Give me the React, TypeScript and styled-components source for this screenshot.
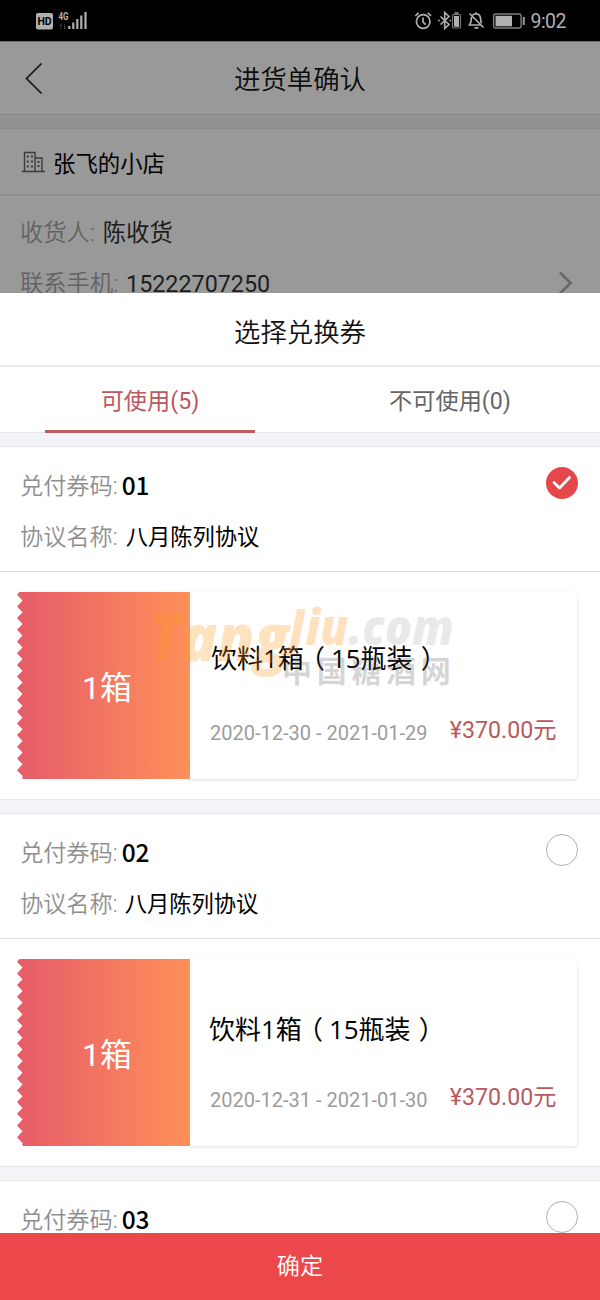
import React from 'react';
import styled, { createGlobalStyle } from 'styled-components';

const Global = createGlobalStyle`
  * { box-sizing: border-box; }
  body {
    margin: 0;
    background: #fff;
    font-family: Roboto, "Noto Sans CJK SC", sans-serif;
  }
`;

const Screen = styled.div`
  width: 600px;
  height: 1300px;
  overflow: hidden;
  display: flex;
  flex-direction: column;
  background: #fff;
`;

const StatusBar = styled.div`
  height: 41px;
  flex: none;
  display: flex;
  justify-content: space-between;
  background: #000;
`;

const Backdrop = styled.div`
  height: 252px;
  flex: none;
  overflow: hidden;
  background: #999;
  border-top: 1px solid #6e6e6e;
`;

const NavBar = styled.header`
  height: 73px;
  display: grid;
  grid-template-columns: 80px 1fr 80px;
  align-items: center;
  border-bottom: 1px solid #87878a;
`;

const Title = styled.h1<{ $color?: string }>`
  margin: 0;
  padding-top: 4px;
  font-size: 26.4px;
  line-height: 40px;
  font-weight: 350;
  text-align: center;
  color: ${(p) => p.$color || '#111'};
`;

const Divider = styled.div<{ $dim?: boolean }>`
  height: ${(p) => (p.$dim ? 14 : 15)}px;
  background: ${(p) => (p.$dim ? '#929294' : '#f3f4f7')};
  border-top: ${(p) => (p.$dim ? 0 : 1)}px solid #e6e6e9;
  border-bottom: 1px solid ${(p) => (p.$dim ? '#8a8a8c' : '#e6e6e9')};
`;

const StoreRow = styled.div`
  height: 67px;
  padding: 1px 0 0 22px;
  display: flex;
  align-items: center;
  gap: 8px;
  border-bottom: 2px solid #8e8e8e;
  font-size: 22.4px;
  color: #000;
`;

const Contact = styled.div`
  display: flex;
  justify-content: space-between;
  padding: 11px 26px 0 20px;
`;

const Line = styled.div`
  height: 51px;
  display: flex;
  align-items: center;
  gap: 8px;
  font-size: 23.3px;
  line-height: 34px;
`;

const DimLabel = styled.span`
  font-weight: 350;
  color: #626262;
`;

const DimValue = styled.span`
  color: #1d1d1d;
`;

const ArrowSlot = styled.div`
  padding-top: 64px;
`;

const Sheet = styled.main`
  flex: 1;
  min-height: 0;
  display: flex;
  flex-direction: column;
  background: #fff;
`;

const SheetHead = styled.div`
  height: 74px;
  flex: none;
  padding-top: 4px;
  display: flex;
  align-items: center;
  justify-content: center;
  border-bottom: 2px solid #ececee;
`;

const Tabs = styled.div`
  height: 65px;
  flex: none;
  display: flex;
  justify-content: space-around;
`;

const Tab = styled.div<{ $active?: boolean }>`
  width: 210px;
  height: 66px;
  padding-top: 4px;
  position: relative;
  z-index: 1;
  text-align: center;
  font-size: 23.2px;
  line-height: 61px;
  color: ${(p) => (p.$active ? '#b9585d' : '#666')};
  border-bottom: ${(p) => (p.$active ? '3px solid #b85d61' : '0')};
`;

const List = styled.div`
  flex: 1;
  min-height: 0;
  overflow: hidden;
`;

const Coupon = styled.section`
  height: 352px;
`;

const CouponHead = styled.div`
  height: 125px;
  padding: 13px 22px 0 20px;
  display: flex;
  justify-content: space-between;
  border-bottom: 1px solid #dedede;
`;

const FieldRow = styled.div<{ $gap: number }>`
  height: 51px;
  display: flex;
  align-items: center;
  gap: ${(p) => p.$gap}px;
  font-size: 23.2px;
  line-height: 34px;
`;

const Label = styled.span`
  font-weight: 350;
  color: #8e8e8e;
`;

const Code = styled.span`
  padding-bottom: 2px;
  font-family: "Noto Sans CJK SC", sans-serif;
  font-size: 24.5px;
  font-weight: 500;
  color: #000;
`;

const Agreement = styled.span`
  font-size: 22.3px;
  color: #000;
`;

const Radio = styled.div<{ $checked?: boolean }>`
  width: 32px;
  height: 32px;
  margin-top: 7px;
  display: flex;
  align-items: center;
  justify-content: center;
  border-radius: 50%;
  background: ${(p) => (p.$checked ? '#e5474b' : '#fff')};
  border: ${(p) => (p.$checked ? '0' : '1.5px solid #b2b2b2')};
`;

const Ticket = styled.div`
  position: relative;
  height: 187px;
  margin: 20px 23px 0 17px;
  display: flex;
`;

const step = 11.7;
const zigzag = Array.from({ length: 16 }, (_, i) => {
  const peak = 2.7 + (15 - i) * step;
  return `5.5px ${(peak + step / 2).toFixed(1)}px, 0px ${peak.toFixed(1)}px`;
}).join(', ');

const Stub = styled.div`
  width: 173px;
  display: flex;
  align-items: center;
  justify-content: center;
  padding: 4px 0 0 7px;
  font-size: 32px;
  line-height: 40px;
  color: #fff;
  background: linear-gradient(90deg, #e65c69, #ff905a);
  clip-path: polygon(2.5px 0px, 173px 0px, 173px 187px, 5.5px 187px, ${zigzag});
`;

const Body = styled.div<{ $lift: number }>`
  flex: 1;
  padding: ${(p) => 46 + p.$lift}px 20.5px 0 20px;
  border-radius: 0 3px 3px 0;
  box-shadow: 0 1px 3px rgba(0, 0, 0, 0.14);
`;

const Product = styled.div<{ $shift: number }>`
  height: 40px;
  margin-left: ${(p) => p.$shift}px;
  font-family: "Open Sans", "Noto Sans CJK SC", sans-serif;
  font-size: 26px;
  line-height: 40px;
  white-space: nowrap;
  color: #000;
`;

const Paren = styled.span<{ $close?: boolean }>`
  margin: ${(p) => (p.$close ? '0 0 0 8px' : '0 6px 0 -5px')};
`;

const Meta = styled.div<{ $lift: number }>`
  margin-top: ${(p) => 35 - p.$lift}px;
  display: flex;
  justify-content: space-between;
  white-space: nowrap;
  line-height: 34px;
`;

const Period = styled.span`
  font-size: 20px;
  padding-top: 3px;
  color: #9c9c9c;
`;

const Price = styled.span`
  font-size: 23.2px;
  color: #b9585d;
`;

const Watermark = styled.div`
  position: absolute;
  left: 131px;
  top: 14px;
  width: 310px;
  height: 90px;
  pointer-events: none;
`;

const MarkDomain = styled.div`
  display: flex;
  align-items: baseline;
  font-family: "Open Sans", sans-serif;
  font-style: italic;
  font-weight: 800;
  white-space: nowrap;
  color: rgba(255, 150, 30, 0.28);
  transform: scaleX(0.92);
  transform-origin: left;
`;

const MarkPart = styled.span<{ $size: number; $rise?: number; $gray?: boolean }>`
  font-size: ${(p) => p.$size}px;
  line-height: 60px;
  position: relative;
  top: ${(p) => -(p.$rise || 0)}px;
  color: ${(p) => (p.$gray ? 'rgba(120, 120, 120, 0.16)' : 'inherit')};
`;

const MarkName = styled.div`
  position: absolute;
  left: 134px;
  top: 41px;
  font-family: "Noto Sans CJK SC", sans-serif;
  font-size: 30px;
  line-height: 44px;
  font-weight: 700;
  letter-spacing: 4.7px;
  white-space: nowrap;
  color: rgba(90, 90, 90, 0.26);
`;

const Confirm = styled.button`
  height: 67px;
  flex: none;
  border: 0;
  border-top: 1px solid #cf5053;
  padding: 0 0 6px;
  background: #ec474b;
  color: #fff;
  font-family: inherit;
  font-size: 23.2px;
  font-weight: 350;
`;

const StatusLeft = () => (
  <svg width="100" height="41" viewBox="0 0 100 41">
    <rect x="36" y="13" width="17" height="16.5" rx="2" fill="#b0b0b0" />
    <text x="44.500" y="25" fontFamily="Roboto, sans-serif" fontWeight="700" fontSize="10.500" textAnchor="middle" fill="#000">HD</text>
    <text x="58.500" y="20" fontFamily="Roboto, sans-serif" fontWeight="700" fontSize="10" textLength="10" lengthAdjust="spacingAndGlyphs" fill="#b0b0b0">4G</text>
    <path d="M61 29V24.5l-1.500 1.500M64.500 24.500V29l1.500-1.500" stroke="#444" fill="none" />
    <path d="M69.300 26v3M73.300 22.500v6.500M77.300 19v10M81.300 15.500v13.500M85.500 12v17" stroke="#b0b0b0" strokeWidth="2.200" />
  </svg>
);

const StatusRight = () => (
  <svg width="190" height="41" viewBox="410 0 190 41" fill="none" stroke="#b0b0b0" strokeWidth="1.700">
    <circle cx="423.200" cy="21.500" r="6.800" />
    <path d="M423 17.500v4.500l2.600 2.600M415.300 16l3.200-3.200M431 16l-3.200-3.200" />
    <path d="M440.500 16.500l8.500 8-4.300 4v-16l4.300 4-8.500 8" strokeWidth="1.600" />
    <path d="M438 20.500h1.800M449.500 20.500h1.500" />
    <rect x="452.500" y="14.500" width="8" height="13.500" rx="1" stroke="#777" strokeWidth="1.200" />
    <path d="M454.500 13h4" stroke="#888" />
    <rect x="454" y="16" width="5" height="10.800" fill="#b0b0b0" stroke="none" />
    <path d="M469.500 13.500l14 14M471.500 17c-.6 4 0 5.500-2 8h12M472.500 15.200c1.500-1.300 2.300-1.400 3.500-1.400 4 0 4.700 2.800 4.700 6.200 0 1.500.4 2.500 1 3.200M474.500 27.800h4M476 12.300v1.500" strokeWidth="1.700" />
    <rect x="493.600" y="14" width="27.500" height="14" rx="2" stroke="#808080" strokeWidth="1.400" />
    <rect x="495.500" y="15.800" width="16.500" height="10.500" fill="#b0b0b0" stroke="none" />
    <path d="M523.800 17v8" stroke="#999" strokeWidth="2" />
    <text x="530.500" y="28" fontFamily="Roboto, sans-serif" fontSize="19.500" fill="#b0b0b0" stroke="none" textLength="36">9:02</text>
  </svg>
);

const BackIcon = () => (
  <svg width="80" height="40" viewBox="0 0 80 40" fill="none" stroke="#161616" strokeWidth="1.700">
    <path d="M41.500 5.500L26.500 20.500l15 15" />
  </svg>
);

const BuildingIcon = () => (
  <svg width="23" height="22" viewBox="0 0 23 22" fill="none" stroke="#3c3c3c" strokeWidth="1.400">
    <path d="M0 20.500h23M2.500 20V1.500H13V20M13 7h7v13" />
    <path d="M4.800 5.500h2M9 5.500h2M4.800 10.500h2M9 10.500h2M4.800 15.500h2M9 15.500h2M15.500 11h2M15.500 15h2" strokeWidth="1.800" />
  </svg>
);

const CheckIcon = () => (
  <svg width="20" height="16" viewBox="0 0 20 16" fill="none" stroke="#fff" strokeWidth="2.800" strokeLinecap="round" strokeLinejoin="round">
    <path d="M2 7.500l5.500 5.500L17.500 2.500" />
  </svg>
);

const Arrow = () => (
  <svg width="16" height="24" viewBox="0 0 16 24" fill="none" stroke="#6a6a6a" strokeWidth="2.800">
    <path d="M2 1.500l10.500 10.500L2 22.500" />
  </svg>
);

type Item = {
  code: string;
  checked?: boolean;
  gap: number;
  period: string;
  lift: number;
  shift: number;
  marked?: boolean;
};

const items: Item[] = [
  { code: '01', checked: true, gap: 8, period: '2020-12-30 - 2021-01-29', lift: 0, shift: 1, marked: true },
  { code: '02', gap: 7, period: '2020-12-31 - 2021-01-30', lift: 4, shift: -1 },
  { code: '03', gap: 8, period: '2020-12-31 - 2021-01-30', lift: 4, shift: -1 },
];

export default function App() {
  return (
    <Screen>
      <Global />
      <StatusBar>
        <StatusLeft />
        <StatusRight />
      </StatusBar>
      <Backdrop>
        <NavBar>
          <BackIcon />
          <Title $color="#0c0c0c">进货单确认</Title>
        </NavBar>
        <Divider $dim />
        <StoreRow>
          <BuildingIcon />
          <span>张飞的小店</span>
        </StoreRow>
        <Contact>
          <div>
            <Line>
              <DimLabel>收货人:</DimLabel>
              <DimValue>陈收货</DimValue>
            </Line>
            <Line>
              <DimLabel>联系手机:</DimLabel>
              <DimValue>15222707250</DimValue>
            </Line>
          </div>
          <ArrowSlot>
            <Arrow />
          </ArrowSlot>
        </Contact>
      </Backdrop>
      <Sheet>
        <SheetHead>
          <Title>选择兑换券</Title>
        </SheetHead>
        <Tabs>
          <Tab $active>可使用(5)</Tab>
          <Tab>不可使用(0)</Tab>
        </Tabs>
        <List>
          {items.map((item) => (
            <React.Fragment key={item.code}>
              <Divider />
              <Coupon>
                <CouponHead>
                  <div>
                    <FieldRow $gap={4}>
                      <Label>兑付券码:</Label>
                      <Code>{item.code}</Code>
                    </FieldRow>
                    <FieldRow $gap={item.gap}>
                      <Label>协议名称:</Label>
                      <Agreement>八月陈列协议</Agreement>
                    </FieldRow>
                  </div>
                  <Radio $checked={item.checked}>{item.checked && <CheckIcon />}</Radio>
                </CouponHead>
                <Ticket>
                  <Stub>1箱</Stub>
                  <Body $lift={item.lift}>
                    <Product $shift={item.shift}>
                      饮料1箱<Paren>（</Paren>15瓶装<Paren $close>）</Paren>
                    </Product>
                    <Meta $lift={item.lift}>
                      <Period>{item.period}</Period>
                      <Price>¥370.00元</Price>
                    </Meta>
                  </Body>
                  {item.marked && (
                    <Watermark>
                      <MarkDomain>
                        <MarkPart $size={65}>Tang</MarkPart>
                        <MarkPart $size={49} $rise={16}>Jiu</MarkPart>
                        <MarkPart $size={49} $rise={16} $gray>.com</MarkPart>
                      </MarkDomain>
                      <MarkName>中国糖酒网</MarkName>
                    </Watermark>
                  )}
                </Ticket>
              </Coupon>
            </React.Fragment>
          ))}
        </List>
        <Confirm>确定</Confirm>
      </Sheet>
    </Screen>
  );
}
